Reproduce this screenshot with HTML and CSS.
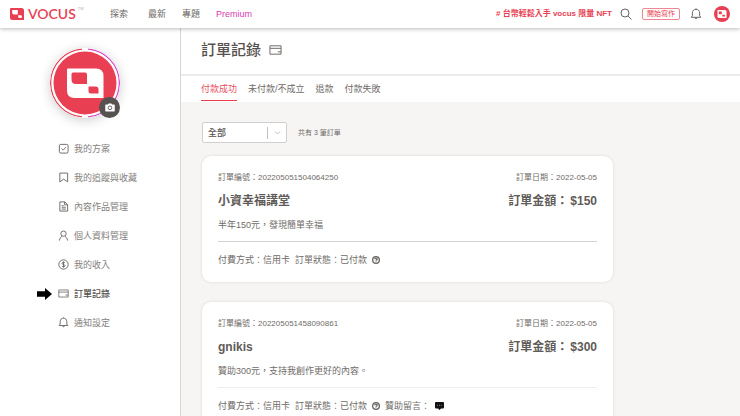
FILE: index.html
```html
<!DOCTYPE html>
<html lang="zh-Hant">
<head>
<meta charset="utf-8">
<meta name="viewport" content="width=device-width, initial-scale=1">
<title>訂單記錄</title>
<link rel="stylesheet" href="styles.css">
</head>
<body>
<svg class="defs" width="0" height="0" aria-hidden="true">
  <symbol id="card" viewBox="0 0 14 12"><path d="M1 1.500h12v9H1zM1 4.200h12M9.500 8h3.500"/></symbol>
  <symbol id="bell" viewBox="0 0 12 12"><path d="M1.200 9.300h9.600L9.600 7.800V4.900C9.600 2.700 8 1.300 6 1.300S2.400 2.700 2.400 4.900v2.900zM4.800 9.500c.2 1.500 2.200 1.500 2.400 0M6 .5v.8"/></symbol>
  <symbol id="help" viewBox="0 0 12 12"><circle cx="6" cy="6" r="5"/><path d="M4.300 4.800c0-2.300 3.500-2.100 3.400 0C7.700 6 6 5.900 6 7.300M6 8.300v1.100"/></symbol>
</svg>

<header class="topbar">
  <a class="brand" href="#" aria-label="vocus">
    <svg class="brand-mark" viewBox="0 0 14 12"><path fill="#e83f53" d="M1 0h10.500Q14 0 14 2.500V12H2.500Q0 12 0 9.500V1Q0 0 1 0z"/><path fill="#fff" d="M2.200 2h5.600v4.600H4Q2.200 6.600 2.200 4.800zM8.200 7.200h2.600q1 0 1 1V10H9.200q-1 0-1-1z"/></svg>
    <span class="brand-name">VOCUS</span><span class="brand-tm">TM</span>
  </a>
  <nav class="topnav">
    <a href="#">探索</a>
    <a href="#">最新</a>
    <a href="#">專題</a>
    <a class="premium" href="#">Premium</a>
  </nav>
  <div class="tools">
    <a class="promo" href="#"># 台幣輕鬆入手 vocus 限量 NFT</a>
    <button class="icon-button" aria-label="搜尋"><svg class="icon tool-icon" viewBox="0 0 12 12"><circle cx="5" cy="5" r="4"/><path d="M8 8l3.500 3.500"/></svg></button>
    <button class="write">開始寫作</button>
    <button class="icon-button notices" aria-label="通知"><svg class="icon tool-icon"><use href="#bell"/></svg></button>
    <button class="icon-button" aria-label="帳號"><svg class="account" viewBox="0 0 16 16"><circle cx="8" cy="8" r="8" fill="#e83f53"/><path fill="#fff" d="M3.500 4h7.500q1.500 0 1.500 1.500V12H5q-1.500 0-1.500-1.500z"/><path fill="#e83f53" d="M4.800 5.500h3v2.700H5.800q-1 0-1-1zM8.300 8.700h1.900q.8 0 .8.800v1H8.300z"/></svg></button>
  </div>
</header>

<div class="layout">
  <aside class="sidebar">
    <div class="profile">
      <svg class="avatar" viewBox="0 0 70 70">
        <circle cx="35" cy="35" r="35" fill="#fff"/>
        <path d="M32 1.100A34 34 0 0 0 32 68.900" fill="none" stroke="#e83f53" stroke-width="1.300"/>
        <path d="M38 1.100A34 34 0 0 1 38 68.900" fill="none" stroke="#d946c8" stroke-width="1.300"/>
        <circle cx="35" cy="35" r="31.500" fill="#e83f53"/>
        <path fill="#fff" d="M18 20.500h28q7.500 0 7.500 7.500v22h-29Q17 50 17 42.500v-21q0-1 1-1z"/>
        <path fill="#e83f53" d="M23 24.500h12q2 0 2 2v9.500H26q-4.500 0-4.500-4.500V26q0-1.500 1.500-1.500zM38.500 38.500h7q3 0 3 3v4h-7.500q-2.500 0-2.500-2.500z"/>
      </svg>
      <button class="camera" aria-label="更換頭像"><svg viewBox="0 0 12 10"><path fill="#fff" d="M1 1.500h2.500L4.300.3h3.400l.8 1.200H11q.7 0 .7.700V9q0 .7-.7.700H1Q.3 9.700.3 9V2.200q0-.7.700-.7z"/><circle cx="6" cy="5.400" r="2.200" fill="none" stroke="#55524f"/></svg></button>
    </div>
    <nav class="menu">
      <a href="#"><svg class="icon" viewBox="0 0 12 12"><rect x="1.500" y="1.500" width="9.500" height="9.500" rx="1.500"/><path d="M4 6l1.700 1.800 3-3.300"/></svg>我的方案</a>
      <a href="#"><svg class="icon" viewBox="0 0 12 12"><path d="M2 1.200h8.500v9.600L6.200 7.800 2 10.800z"/></svg>我的追蹤與收藏</a>
      <a href="#"><svg class="icon" viewBox="0 0 12 12"><path d="M2 1h5.500l3 3v7H2zM7.200 1v3.200h3.300M4 5h2M4 6.800h4.500M4 8.800h4.500"/></svg>內容作品管理</a>
      <a href="#"><svg class="icon" viewBox="0 0 12 12"><circle cx="6" cy="4" r="2.900"/><path d="M1.500 11.500C2 8.800 3.300 7.500 4.500 6.700M10.500 11.500C10 8.800 8.700 7.500 7.500 6.700"/></svg>個人資料管理</a>
      <a href="#"><svg class="icon" viewBox="0 0 12 12"><circle cx="6" cy="6" r="5.100"/><path d="M7.700 4.300C6.900 3.200 4.400 3.400 4.400 4.800S7.700 5.900 7.700 7.300 5 8.900 4.200 7.700M6 2.700v6.600"/></svg>我的收入</a>
      <a class="current" href="#" aria-current="page"><svg class="pointer" viewBox="0 0 15 12"><path d="M0 3.300h8V0l7 6-7 6V8.700H0z"/></svg><svg class="icon"><use href="#card"/></svg>訂單記錄</a>
      <a href="#"><svg class="icon"><use href="#bell"/></svg>通知設定</a>
    </nav>
  </aside>

  <main class="main">
    <div class="heading"><h1>訂單記錄</h1><svg class="icon heading-icon"><use href="#card"/></svg></div>
    <nav class="tabs">
      <a class="active" href="#">付款成功</a>
      <a href="#">未付款/不成立</a>
      <a href="#">退款</a>
      <a href="#">付款失敗</a>
    </nav>
    <section class="orders">
      <div class="filter">
        <div class="select-box">
          <select aria-label="訂單篩選"><option>全部</option></select>
          <svg class="chevron" viewBox="0 0 20 12"><path d="M.5 0v12M8 4.500l2.500 2.500L13 4.500"/></svg>
        </div>
        <span class="count">共有 3 筆訂單</span>
      </div>
      <article class="order">
        <div class="row small"><span>訂單編號：202205051504064250</span><span>訂單日期：2022-05-05</span></div>
        <div class="row title"><h2>小資幸福講堂</h2><strong class="amount"><span>訂單金額：</span><span>$150</span></strong></div>
        <p>半年150元，發現簡單幸福</p>
        <div class="meta"><span>付費方式：信用卡</span><span>訂單狀態：已付款</span><svg class="icon help"><use href="#help"/></svg></div>
      </article>
      <article class="order light">
        <div class="row small"><span>訂單編號：202205051458090861</span><span>訂單日期：2022-05-05</span></div>
        <div class="row title"><h2>gnikis</h2><strong class="amount"><span>訂單金額：</span><span>$300</span></strong></div>
        <p>贊助300元，支持我創作更好的內容。</p>
        <div class="meta"><span>付費方式：信用卡</span><span>訂單狀態：已付款</span><svg class="icon help"><use href="#help"/></svg><span>贊助留言：</span><svg class="message" viewBox="0 0 9 8"><path d="M1 0h7q1 0 1 1v4.500q0 1-1 1H6L4.500 8 3 6.500H1q-1 0-1-1V1q0-1 1-1z"/><path class="dots" d="M2 3.300h1M4 3.300h1M6 3.300h1"/></svg></div>
      </article>
    </section>
  </main>
</div>
</body>
</html>
```
FILE: styles.css
```css
* { box-sizing: border-box; }
html { scrollbar-width: none; }
body {
  margin: 0;
  min-height: 100vh;
  display: flex;
  flex-direction: column;
  font-family: "Liberation Sans", "Noto Sans CJK TC", sans-serif;
  font-size: 9px;
  line-height: 12px;
  color: #6f6b68;
  background: #fff;
}
a { color: inherit; text-decoration: none; }
button { font: inherit; padding: 0; border: 0; background: none; color: inherit; }
h1, h2, p { margin: 0; }
svg { display: block; flex: none; }
.defs { position: absolute; }
.icon { width: 11px; height: 11px; fill: none; stroke: #686562; stroke-width: 1; }

.topbar {
  position: relative;
  z-index: 1;
  display: flex;
  align-items: center;
  height: 28px;
  padding: 0 10px;
  background: #fff;
  box-shadow: 0 1px 4px rgba(0, 0, 0, .28);
}
.brand { display: flex; align-items: center; width: 100px; color: #e83f53; }
.brand-mark { width: 14px; height: 12px; }
.brand-name { margin-left: 4px; font-family: Lato, sans-serif; font-size: 14px; font-weight: 600; line-height: 16px; }
.brand-tm { align-self: flex-start; margin-left: 2px; font-size: 4px; line-height: 5px; color: #b5b2b0; }
.topnav { display: flex; gap: 20px; flex: 1; }
.topnav .premium { margin-left: -4px; color: #d93bb0; }
.topnav a:nth-child(3) { margin-left: -4px; }
.tools { display: flex; align-items: center; gap: 10px; }
.promo { font-size: 8px; font-weight: 700; color: #e83f53; margin-right: -2px; }
.tool-icon { width: 12px; height: 12px; }
.notices { margin-right: 2px; }
.write { width: 38px; height: 12px; border: 1px solid #ee8793; border-radius: 2px; font-size: 7px; line-height: 10px; color: #e83f53; white-space: nowrap; }
.account { width: 16px; height: 16px; }

.layout { display: flex; flex: 1; }
.sidebar { width: 181px; flex: none; border-right: 1px solid #d8d6d5; }
.profile { position: relative; width: 70px; margin: 20px 0 0 50px; }
.avatar { width: 70px; height: 70px; border-radius: 50%; box-shadow: 0 2px 12px rgba(0, 0, 0, .2); }
.camera {
  position: absolute;
  right: 0;
  bottom: 0;
  display: grid;
  place-items: center;
  width: 21px;
  height: 21px;
  border-radius: 50%;
  background: #55524f;
}
.camera svg { width: 10px; height: 9px; }
.menu { margin: 16px 0 0 58px; color: #85817e; }
.menu a { position: relative; display: flex; align-items: center; gap: 5px; height: 29px; }
.menu .current { font-weight: 500; color: #55504d; }
.pointer { position: absolute; left: -21px; width: 15px; height: 12px; fill: #000; }

.main { flex: 1; min-width: 0; display: flex; flex-direction: column; }
.heading { display: flex; align-items: center; gap: 8px; height: 48px; padding: 0 20px 3px; border-bottom: 2px solid #ececeb; }
h1 { font-size: 15px; line-height: 20px; font-weight: 500; color: #55514e; }
.heading-icon { width: 13px; height: 12px; }
.tabs { display: flex; gap: 11px; padding: 0 20px 1px; }
.tabs a { padding: 7px 0 5px; border-bottom: 1px solid transparent; }
.tabs .active { color: #e8505f; border-bottom-color: #e83f53; }
.orders { flex: 1; padding: 20px 21px; background: #f6f5f3; }
.filter { display: flex; align-items: center; gap: 11px; margin-bottom: 13px; }
.select-box { display: grid; align-items: center; width: 85px; }
.select-box > * { grid-area: 1 / 1; }
select {
  appearance: none;
  height: 21px;
  padding: 0 5px;
  border: 1px solid #d2d0ce;
  border-radius: 2px;
  background: #fff;
  font: inherit;
  font-weight: 500;
  color: #55514e;
}
.chevron { justify-self: end; width: 20px; height: 12px; fill: none; stroke: #c2bfbd; pointer-events: none; }
.count { font-size: 7px; }

.order {
  max-width: 411px;
  margin-bottom: 20px;
  padding: 16px;
  border-radius: 9px;
  background: #fff;
  box-shadow: 0 0 3px rgba(0, 0, 0, .13);
}
.row { display: flex; justify-content: space-between; }
.small { font-size: 8px; }
.title { margin: 8px 0 9px; font-size: 12px; line-height: 18px; color: #5f5b58; }
.amount { display: flex; gap: 2px; }
h2 { font-size: 12px; font-weight: 700; }
.order p { padding-bottom: 10px; border-bottom: 1px solid #d4d2d1; }
.light p { border-color: #ededec; }
.meta { display: flex; align-items: center; gap: 5px; margin-top: 12px; }
.help { width: 8px; height: 8px; stroke-width: 2; }
.message { width: 9px; height: 8px; fill: #111; }
.dots { stroke: #777; }
```
